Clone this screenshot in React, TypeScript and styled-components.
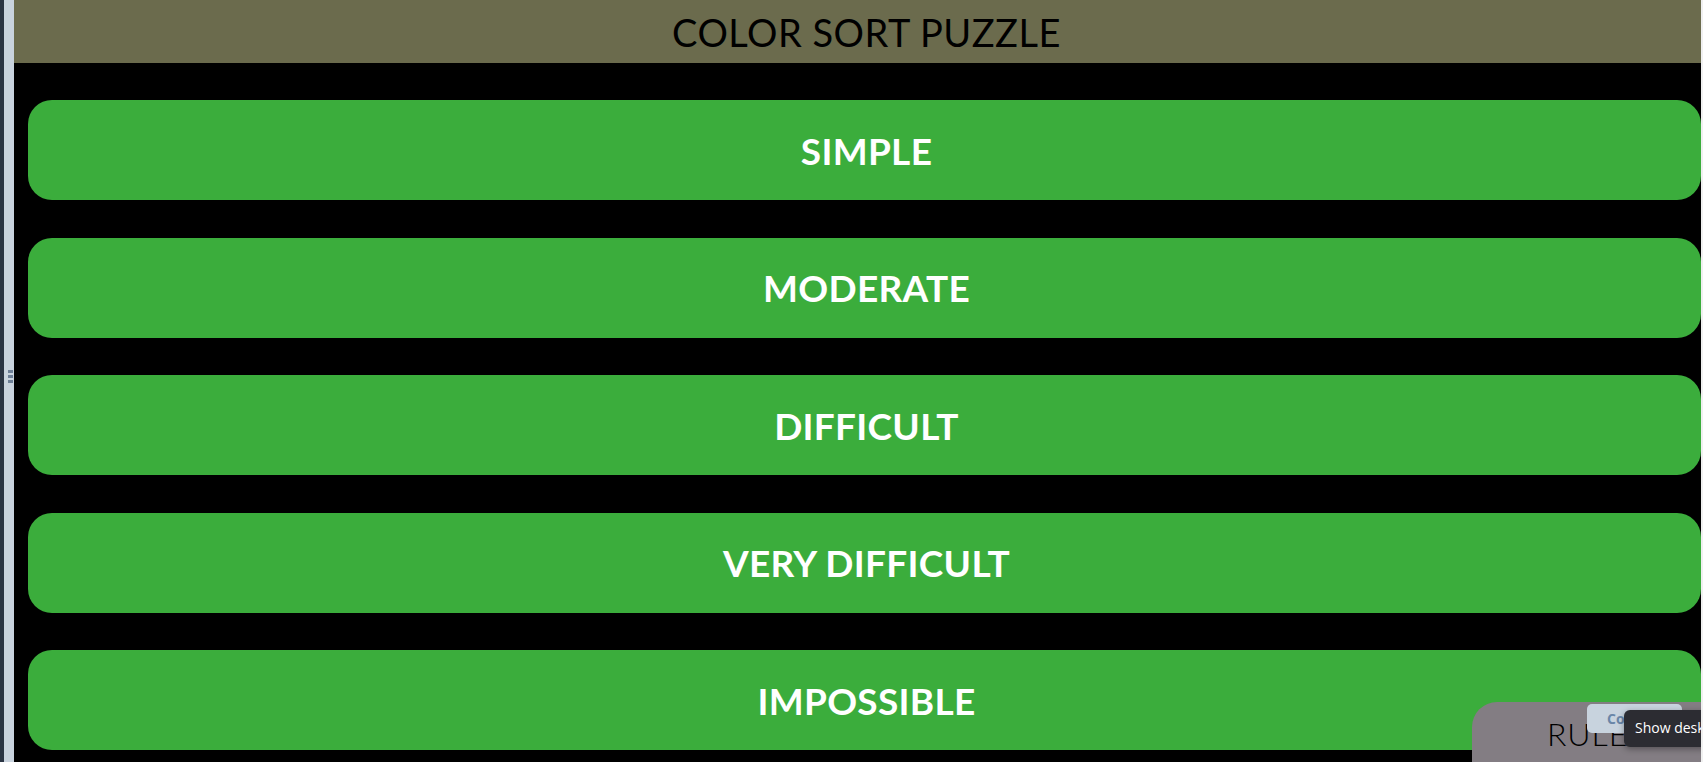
import React from "react";
import styled, { createGlobalStyle } from "styled-components";

const Global = createGlobalStyle`
  html, body { margin: 0; padding: 0; background: #000; overflow: hidden; }
  body { font-family: "Lato", "Open Sans", sans-serif; }
  * { box-sizing: border-box; }
`;

const Shell = styled.div`
  display: flex;
  width: 1703px;
  height: 762px;
  overflow: hidden;
  position: relative;
`;

const DarkEdge = styled.div`
  width: 4px;
  background: #2b3544;
  flex-shrink: 0;
`;

const Splitter = styled.div`
  width: 10px;
  background: #c9d3de;
  flex-shrink: 0;
  display: flex;
  flex-direction: column;
  align-items: center;
  justify-content: center;
  gap: 2px;
  padding-left: 2px;
  padding-bottom: 10px;
`;

const Grip = styled.span`
  display: block;
  width: 5px;
  height: 3px;
  background: #6d7f97;
`;

const Main = styled.main`
  flex: 1;
  background: #000;
  display: flex;
  flex-direction: column;
  position: relative;
  overflow: hidden;
`;

const RightEdge = styled.div`
  width: 2px;
  background: #f0f0f0;
  flex-shrink: 0;
`;

const Header = styled.header`
  height: 63px;
  flex-shrink: 0;
  background: #6b6b4d;
  display: flex;
  align-items: center;
  justify-content: center;
  padding-left: 18px;
`;

const Title = styled.h1`
  margin: 0;
  font-family: "Lato", sans-serif;
  font-weight: 400;
  font-size: 38px;
  letter-spacing: 0.5px;
  color: #000;
`;

const LevelList = styled.div`
  display: flex;
  flex-direction: column;
  gap: 37.6px;
  padding: 37px 0 0 14px;
`;

const LevelButton = styled.button`
  height: 100px;
  flex-shrink: 0;
  width: 100%;
  border: none;
  border-radius: 24px;
  background: #3bad3c;
  color: #fff;
  font-family: "Lato", sans-serif;
  font-weight: 700;
  font-size: 37px;
  letter-spacing: 0.3px;
  display: flex;
  align-items: center;
  justify-content: center;
  padding: 0 0 0 4px;
  cursor: pointer;
`;

const RulesTab = styled.div`
  position: absolute;
  left: 1458px;
  top: 702px;
  width: 300px;
  height: 100px;
  background: #837d83;
  border-top-left-radius: 25px;
  padding: 12px 0 0 75px;
  font-family: "Lato", sans-serif;
  font-weight: 300;
  font-size: 32px;
  letter-spacing: 1px;
  color: #000;
`;

const CopyChip = styled.div`
  position: absolute;
  left: 1573px;
  top: 704px;
  width: 95px;
  height: 29px;
  background: #c8d3de;
  border-radius: 5px;
  padding: 5px 0 0 20px;
  font-family: "Open Sans", sans-serif;
  font-weight: 700;
  font-size: 14px;
  color: #6a86a8;
`;

const Tooltip = styled.div`
  position: absolute;
  left: 1610px;
  top: 710px;
  width: 140px;
  height: 37px;
  background: #2c2c32;
  border-radius: 6px;
  box-shadow: 0 2px 6px rgba(0, 0, 0, 0.35);
  padding: 8px 0 0 11px;
  font-family: "Open Sans", sans-serif;
  font-size: 14px;
  color: #fff;
  white-space: nowrap;
`;

const levels = ["SIMPLE", "MODERATE", "DIFFICULT", "VERY DIFFICULT", "IMPOSSIBLE"];

export default function App() {
  return (
    <>
      <Global />
      <Shell>
        <DarkEdge />
        <Splitter>
          <Grip />
          <Grip />
          <Grip />
        </Splitter>
        <Main>
          <Header>
            <Title>COLOR SORT PUZZLE</Title>
          </Header>
          <LevelList>
            {levels.map((l) => (
              <LevelButton key={l}>{l}</LevelButton>
            ))}
          </LevelList>
          <RulesTab>RULES</RulesTab>
          <CopyChip>Co</CopyChip>
          <Tooltip>Show desktop</Tooltip>
        </Main>
        <RightEdge />
      </Shell>
    </>
  );
}
